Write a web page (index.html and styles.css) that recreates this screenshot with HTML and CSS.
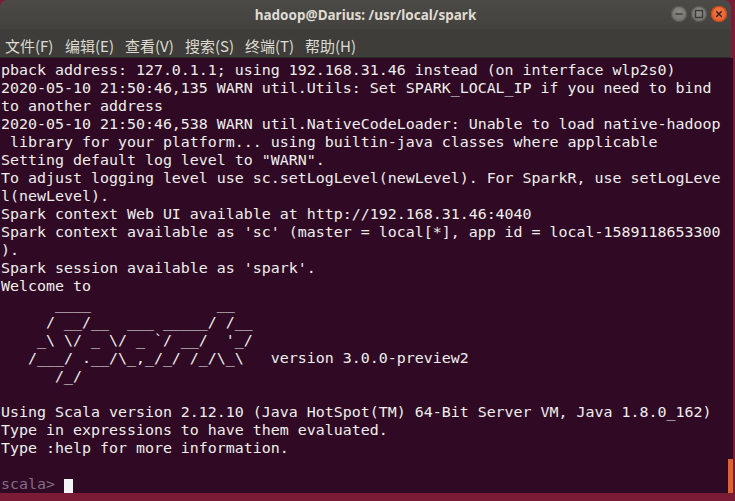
FILE: index.html
```html
<!DOCTYPE html>
<html>
<head>
<meta charset="utf-8">
<link rel="stylesheet" href="styles.css">
</head>
<body>
<div class="window">
  <div class="titlebar">
    <div class="title">hadoop@Darius: /usr/local/spark</div>
    <div class="controls">
      <span class="btn"><svg width="16" height="16" viewBox="0 0 16 16"><line x1="4.5" y1="8" x2="11.5" y2="8" stroke="#3a3935" stroke-width="1.4"/></svg></span>
      <span class="btn"><svg width="16" height="16" viewBox="0 0 16 16"><rect x="4.5" y="4.5" width="7" height="7" fill="none" stroke="#3a3935" stroke-width="1.3"/></svg></span>
      <span class="btn close"><svg width="16" height="16" viewBox="0 0 16 16"><path d="M5.3 5.3 L10.7 10.7 M10.7 5.3 L5.3 10.7" stroke="#3a2020" stroke-width="1.5"/></svg></span>
    </div>
  </div>
  <div class="menubar">
    <span class="menu">文件(F)</span>
    <span class="menu">编辑(E)</span>
    <span class="menu">查看(V)</span>
    <span class="menu">搜索(S)</span>
    <span class="menu">终端(T)</span>
    <span class="menu">帮助(H)</span>
  </div>
  <div class="term">
    <pre class="output">pback address: 127.0.1.1; using 192.168.31.46 instead (on interface wlp2s0)
2020-05-10 21:50:46,135 WARN util.Utils: Set SPARK_LOCAL_IP if you need to bind
to another address
2020-05-10 21:50:46,538 WARN util.NativeCodeLoader: Unable to load native-hadoop
 library for your platform... using builtin-java classes where applicable
Setting default log level to "WARN".
To adjust logging level use sc.setLogLevel(newLevel). For SparkR, use setLogLeve
l(newLevel).
Spark context Web UI available at http://192.168.31.46:4040
Spark context available as 'sc' (master = local[*], app id = local-1589118653300
).
Spark session available as 'spark'.
Welcome to
      ____              __
     / __/__  ___ _____/ /__
    _\ \/ _ \/ _ `/ __/  '_/
   /___/ .__/\_,_/_/ /_/\_\   version 3.0.0-preview2
      /_/
         
Using Scala version 2.12.10 (Java HotSpot(TM) 64-Bit Server VM, Java 1.8.0_162)
Type in expressions to have them evaluated.
Type :help for more information.

<span class="prompt">scala&gt;</span> <span class="cursor"> </span></pre>
    <div class="scrollbar"><div class="thumb"></div></div>
  </div>
</div>
</body>
</html>
```
FILE: styles.css
```css
html, body {
  margin: 0;
  padding: 0;
}
body {
  background: #7b1b36;
  width: 735px;
  height: 501px;
  overflow: hidden;
}
.window {
  width: 733px;
  height: 493px;
  display: flex;
  flex-direction: column;
}
.titlebar {
  height: 29px;
  flex: none;
  background: linear-gradient(#4b4a46, #43423e);
  border-top-right-radius: 7px;
  border-top-left-radius: 7px;
  width: 731px;
  position: relative;
  display: flex;
  align-items: center;
  justify-content: center;
}
.title {
  font-family: "Noto Sans", "DejaVu Sans", sans-serif;
  font-weight: bold;
  font-size: 13.5px;
  color: #dfdbd2;
  padding-top: 1px;
}
.controls {
  position: absolute;
  right: 4px;
  top: 6px;
  display: flex;
  gap: 4px;
}
.btn {
  width: 16px;
  height: 16px;
  border-radius: 50%;
  background: radial-gradient(circle at 50% 40%, #8a8983, #6b6a65);
  box-shadow: inset 0 0 0 1px #55544f;
  display: flex;
}
.btn.close {
  background: radial-gradient(circle at 50% 40%, #f37a48, #e0531f);
  box-shadow: inset 0 0 0 1px #c4461a;
}
.menubar {
  height: 29px;
  flex: none;
  width: 731px;
  background: #3e3d39;
  display: flex;
  align-items: center;
  padding: 4px 0 0 5px;
  gap: 12px;
  box-sizing: border-box;
  border-bottom: 1px solid #2b2a27;
}
.menu {
  font-family: "Noto Sans CJK SC", "Noto Sans", sans-serif;
  font-size: 15px;
  color: #dfdbd2;
  width: 48px;
  white-space: nowrap;
}
.term {
  flex: 1;
  min-height: 0;
  background: #300a24;
  display: flex;
  position: relative;
  overflow: hidden;
}
.output {
  margin: 0;
  padding: 3px 0 0 1px;
  flex: 1;
  font-family: "DejaVu Sans Mono", monospace;
  font-size: 14.95px;
  line-height: 18px;
  color: #eeeeec;
  white-space: pre;
  overflow: hidden;
}
.prompt {
  color: #836c88;
}
.cursor {
  display: inline-block;
  width: 9px;
  height: 17px;
  background: #f4f4f4;
  vertical-align: -4px;
}
.scrollbar {
  width: 5px;
  display: flex;
  flex-direction: column;
  justify-content: flex-end;
}
.thumb {
  height: 34px;
  background: #d9642e;
}
```
